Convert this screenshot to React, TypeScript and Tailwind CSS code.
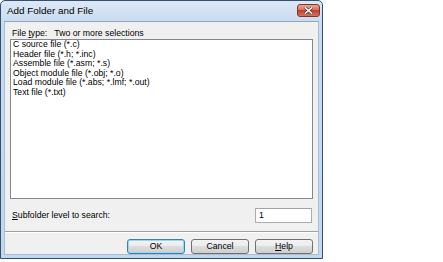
const fileTypes = [
  'C source file (*.c)',
  'Header file (*.h; *.inc)',
  'Assemble file (*.asm; *.s)',
  'Object module file (*.obj; *.o)',
  'Load module file (*.abs; *.lmf; *.out)',
  'Text file (*.txt)',
];

function DlgButton({ children, focused }: { children: React.ReactNode; focused?: boolean }) {
  return (
    <button
      className={`w-[58px] h-[15px] rounded-[3px] border flex items-center justify-center text-[8.7px] leading-none text-black bg-[linear-gradient(#f3f3f3_0%,#ebebeb_50%,#dddddd_50%,#cfcfcf_100%)] ${
        focused ? 'border-[#3c7fb1] shadow-[inset_0_0_0_1px_#9ad6f0]' : 'border-[#707070]'
      }`}
    >
      {children}
    </button>
  );
}

export default function App() {
  return (
    <div className="w-[443px] h-[262px] bg-white overflow-hidden font-['Liberation_Sans',Arial,sans-serif]">
      <div className="w-[323px] h-[259px] flex flex-col rounded-t-[5px] border border-[#34506e] bg-[linear-gradient(#dce8f5,#c8dbef_22px,#c4d8ee)]">
        {/* title bar */}
        <div className="h-[20px] shrink-0 flex items-center justify-between pl-[6px] pr-[2px]">
          <span className="text-[9.9px] text-black leading-none">Add Folder and File</span>
          <div className="w-[23px] h-[13px] mb-[1px] rounded-[3px] border border-[#83352d] bg-[linear-gradient(#e9a596,#d66b57_50%,#c4402b_50%,#d4735d)] flex items-center justify-center">
            <svg width="9" height="7" viewBox="0 0 9 7">
              <path d="M1 0.5 L8 6.5 M8 0.5 L1 6.5" stroke="#5a1f18" strokeWidth="2.6" />
              <path d="M1 0.5 L8 6.5 M8 0.5 L1 6.5" stroke="#ffffff" strokeWidth="1.6" />
            </svg>
          </div>
        </div>

        {/* client area */}
        <div className="mx-[3px] h-[234px] bg-[#f0f0f0] border border-[#a9bdd4] border-t-[#8fa6c1] flex flex-col px-[5px] pt-[6px] text-[8.7px] text-black">
          <div className="leading-[11px] pl-[2px] h-[11px]">
            File <span className="underline">t</span>ype:&nbsp;&nbsp; Two or more selections
          </div>
          <div className="h-[160px] bg-white border border-[#828790] px-[2px] leading-[9.5px]">
            {fileTypes.map((t) => (
              <div key={t}>{t}</div>
            ))}
          </div>
          <div className="mt-[9px] h-[15px] flex items-center justify-between pl-[2px] pr-[1px]">
            <span>
              <span className="underline">S</span>ubfolder level to search:
            </span>
            <div className="w-[57px] h-[15px] bg-white border border-[#abadb3] border-t-[#a0a4ac] flex items-center px-[3px]">
              1
            </div>
          </div>
          <div className="-mx-[5px] mt-[8px] h-[2px] border-t border-[#a0a0a0] border-b border-b-white" />
          <div className="mt-[6px] flex justify-end gap-[6px]">
            <DlgButton focused>OK</DlgButton>
            <DlgButton>Cancel</DlgButton>
            <DlgButton>
              <span className="underline">H</span>elp
            </DlgButton>
          </div>
        </div>
      </div>
    </div>
  );
}
